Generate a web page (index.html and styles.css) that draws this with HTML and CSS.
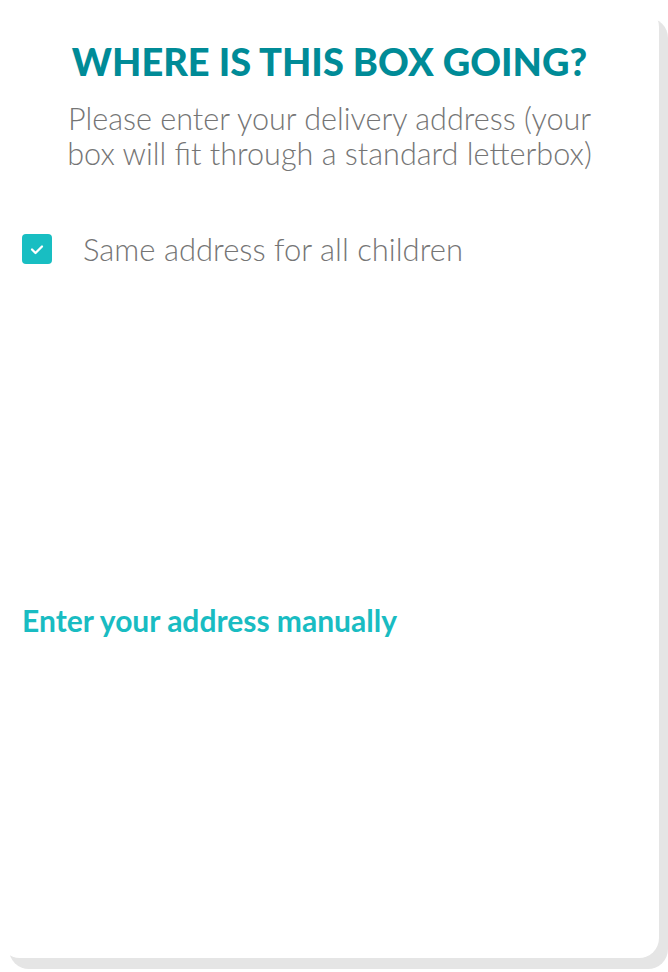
FILE: index.html
```html
<!DOCTYPE html>
<html lang="en">
<head>
<meta charset="utf-8">
<title>Where is this box going?</title>
<link rel="stylesheet" href="styles.css">
</head>
<body>
<main class="card">
  <header class="intro">
    <h1 class="title">WHERE IS THIS BOX GOING?</h1>
    <p class="subtitle">Please enter your delivery address (your box will fit through a standard letterbox)</p>
  </header>
  <label class="check-row">
    <span class="checkbox">
      <svg viewBox="0 0 30 30" width="30" height="30" aria-hidden="true">
        <path d="M10 15.5 L13.5 19 L20 12.5" fill="none" stroke="#ffffff" stroke-width="2.3" stroke-linecap="round" stroke-linejoin="round"/>
      </svg>
    </span>
    <span class="check-label">Same address for all children</span>
  </label>
  <div class="lookup-space"></div>
  <a class="manual-link" href="#">Enter your address manually</a>
</main>
</body>
</html>
```

FILE: styles.css
```css
html, body {
  margin: 0;
  padding: 0;
  background: #ffffff;
}
body {
  font-family: Lato, "Open Sans", sans-serif;
  padding: 7px 0 0 0;
  min-height: 972px;
  box-sizing: border-box;
}
.card {
  box-sizing: border-box;
  width: 659px;
  height: 951px;
  background: #ffffff;
  border-radius: 20px;
  box-shadow: 9px 11px 0 #e5e5e5;
  padding: 32px 22px 0 22px;
  display: flex;
  flex-direction: column;
}
.intro {
  display: flex;
  flex-direction: column;
  align-items: center;
  text-align: center;
}
.title {
  margin: 0;
  color: #008b97;
  font-weight: 900;
  font-size: 38px;
  line-height: 44px;
  letter-spacing: 0;
}
.subtitle {
  margin: 18px 0 0 0;
  width: 560px;
  color: #757575;
  font-weight: 300;
  font-size: 30.6px;
  line-height: 35px;
}
.check-row {
  display: flex;
  align-items: center;
  gap: 31px;
  margin-top: 63px;
}
.checkbox {
  width: 30px;
  height: 30px;
  border-radius: 4px;
  background: #18bec2;
  display: flex;
}
.check-label {
  color: #757575;
  font-weight: 300;
  font-size: 31px;
  line-height: 30px;
}
.lookup-space {
  height: 339px;
}
.manual-link {
  align-self: flex-start;
  color: #19bcc2;
  font-weight: 700;
  font-size: 30px;
  line-height: 34px;
  text-decoration: none;
}
```
